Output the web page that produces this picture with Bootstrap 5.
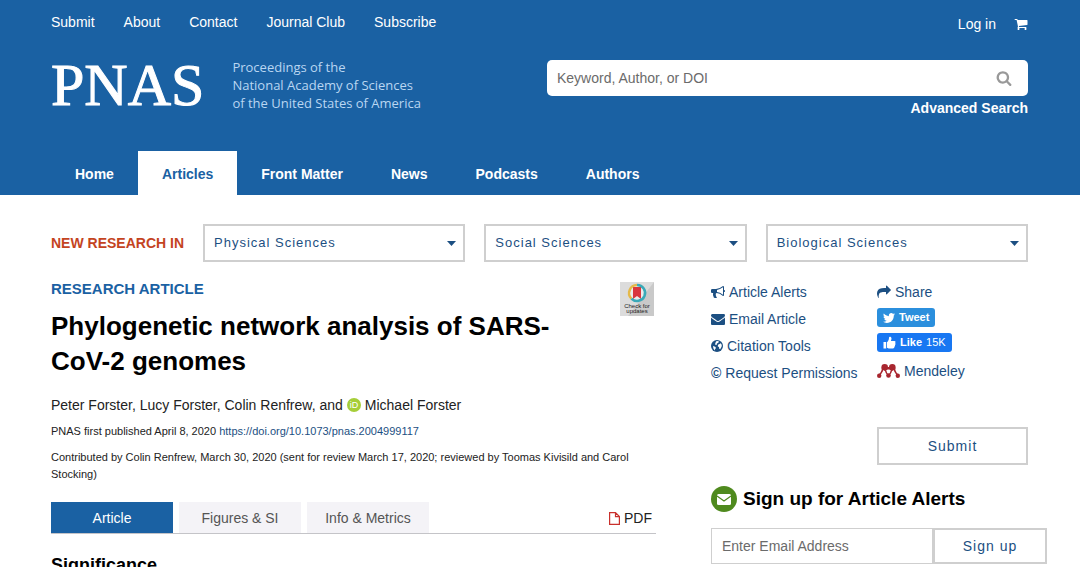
<!DOCTYPE html>
<html lang="en">
<head>
<meta charset="utf-8">
<meta name="viewport" content="width=device-width, initial-scale=1">
<title>Phylogenetic network analysis of SARS-CoV-2 genomes | PNAS</title>
<link href="https://cdn.jsdelivr.net/npm/bootstrap@5.3.0/dist/css/bootstrap.min.css" rel="stylesheet">
<style>
  :root { --pnas-blue: #1a61a3; --pnas-link: #1c4f82; --pnas-line: #cfcfcf; }
  body { font-family: "Liberation Sans", Arial, sans-serif; font-size: 14px; line-height: 20px; color: #333; background: #fff; }
  a { text-decoration: none; color: var(--pnas-link); }
  svg { display: block; flex: none; }
  .glyph { fill: currentColor; }
  .wrap { padding: 0 52px 0 51px; }
  .site-header { background: var(--pnas-blue); }
  .site-header a { color: #fff; }
  .top-links { gap: 29px; padding-top: 12px; }
  .account { gap: 18px; padding-top: 14px; }
  .brand-row { padding-top: 24px; height: 117px; }
  .logo { font-family: "Liberation Serif", serif; font-size: 60px; line-height: 54px; -webkit-text-stroke: 1px #fff; }
  .tagline { font-family: "Open Sans", sans-serif; font-size: 13px; line-height: 18px; color: #b9d6f2; margin-left: 28px; }
  .search-area { width: 481px; }
  .search-box { height: 36px; background: #fff; border-radius: 5px; margin-top: 2px; margin-bottom: 2px; }
  .search-box input { font-size: 14px; padding: 0 10px; border: 0; background: none; color: #555; }
  .search-box button { color: #999; padding: 0 15px; }
  input::placeholder { color: #6b6b6b !important; opacity: 1; }
  .main-nav .nav-link { font-weight: bold; padding: 13px 24px 11px; line-height: 20px; border-radius: 0; color: #fff; }
  .main-nav .nav-link.active { background: #fff; color: var(--pnas-blue); }
  .research-bar { gap: 19px; padding-top: 29px; }
  .research-bar h2 { font-size: 14px; font-weight: bold; line-height: 20px; color: #c4441f; white-space: nowrap; }
  .research-bar .form-select { flex: 1 1 0; height: 38px; border: 2px solid var(--pnas-line); border-radius: 0; color: var(--pnas-link); font-size: 13px; letter-spacing: 1px; padding: 0 24px 0 9px;
    background-image: url("data:image/svg+xml,%3Csvg xmlns='http://www.w3.org/2000/svg' viewBox='0 0 9 5'%3E%3Cpath fill='%231c4f82' d='M0 0h9L4.5 5z'/%3E%3C/svg%3E"); background-size: 9px 5px; background-position: right 7px center; }
  .page-grid { display: grid; grid-template-columns: minmax(0, 605fr) minmax(0, 317fr); column-gap: 55px; padding-top: 17px; }
  .kicker { font-size: 15px; font-weight: bold; line-height: 20px; color: var(--pnas-blue); }
  h1 { font-size: 26px; font-weight: bold; line-height: 35px; color: #000; margin: 10px 0 16px; }
  .badge-updates { margin: 3px 2px 0 0; }
  .authors { gap: 4px; color: #222; }
  .fine { font-size: 11px; line-height: 17px; margin-top: 8px; color: #222; }
  .fine + .fine { margin-top: 9px; }
  .article-tabs { gap: 6px; margin-top: 19px; border-bottom: 1px solid #c4c4c8; }
  .article-tabs .nav-link { width: 122px; height: 31px; padding: 6px 0; line-height: 20px; text-align: center; background: #f4f3f7; color: #555; border-radius: 0; }
  .article-tabs .nav-link.active { background: var(--pnas-blue); color: #fff; }
  .pdf-link { gap: 4px; color: #222; padding: 6px 4px 5px 0; }
  .section-title { font-size: 18px; font-weight: bold; line-height: 26px; color: #000; margin: 18px 0 0; }
  .tools { display: grid; grid-template-columns: 166px 1fr; padding-top: 3px; }
  .tool-list { gap: 7px; }
  .tool-list a { display: flex; align-items: center; gap: 4px; white-space: nowrap; }
  .share-btn { height: 19px; border: 0; border-radius: 3px; color: #fff; font-size: 11px; line-height: 19px; font-weight: bold; padding: 0 6px; gap: 4px; }
  .tweet { background: #2b8fdd; margin: -1px 0; }
  .like { background: #1877f2; margin-bottom: 2px; }
  .like span { font-weight: normal; }
  .btn-outline { border: 2px solid var(--pnas-line); border-radius: 0; background: #fff; color: var(--pnas-link); font-size: 14px; letter-spacing: 1px; padding: 0; }
  .submit-btn { height: 38px; margin-top: 46px; }
  .signup-title { gap: 6px; margin: 21px 0 16px; }
  .signup-title h2 { font-size: 19px; line-height: 26px; font-weight: bold; color: #000; margin: 0; }
  .signup { height: 36px; }
  .signup input { flex: none; width: 222px; border: 1px solid var(--pnas-line); border-radius: 0; font-size: 14px; padding: 0 10px; }
  .signup button { flex: none; width: 114px; }
</style>
</head>
<body>
<header class="site-header">
  <div class="wrap">
    <div class="d-flex justify-content-between">
      <nav class="top-links d-flex" aria-label="Site">
        <a href="#">Submit</a><a href="#">About</a><a href="#">Contact</a><a href="#">Journal Club</a><a href="#">Subscribe</a>
      </nav>
      <div class="account d-flex align-items-center">
        <a href="#">Log in</a>
        <a href="#" aria-label="Cart"><svg class="glyph" width="14" height="14" viewBox="0 0 1792 1792"><path d="M704 1536q0 52-38 90t-90 38-90-38-38-90 38-90 90-90 90 38 38 90zm896 0q0 52-38 90t-90 38-90-38-38-90 38-90 90-90 90 38 38 90zm128-1088v512q0 24-16.500 42.500t-40.500 21.500l-1044 122q13 60 13 70 0 16-24 64h920q26 0 45 19t19 45-19 45-45 19h-1024q-26 0-45-19t-19-45q0-11 8-31.500t16-36 21.500-40 15.500-29.500l-177-823h-204q-26 0-45-19t-19-45 19-45 45-19h256q16 0 28.500 6.500t19.500 15.500 13 24.500 8 26 5.500 29.500 4.500 26h1201q26 0 45 19t19 45z"/></svg></a>
      </div>
    </div>
    <div class="brand-row d-flex justify-content-between align-items-start">
      <a href="#" class="d-flex align-items-center"><span class="logo">PNAS</span><span class="tagline">Proceedings of the<br>National Academy of Sciences<br>of the United States of America</span></a>
      <form class="search-area">
        <div class="search-box d-flex">
          <input type="text" class="form-control" placeholder="Keyword, Author, or DOI" aria-label="Search">
          <button type="button" class="btn" aria-label="Submit search"><svg class="glyph" width="16" height="16" viewBox="0 0 1792 1792"><path d="M1216 832q0-185-131.500-316.500t-316.500-131.500-316.500 131.500-131.500 316.500 131.500 316.500 316.500 131.500 316.500-131.500 131.500-316.500zm512 832q0 52-38 90t-90 38q-54 0-90-38l-343-342q-179 124-399 124-143 0-273.500-55.500t-225-150-150-225-55.500-273.500 55.500-273.500 150-225 225-150 273.500-55.500 273.500 55.500 225 150 150 225 55.500 273.500q0 220-124 399l343 343q37 37 37 90z"/></svg></button>
        </div>
        <div class="text-end"><a href="#" class="fw-bold">Advanced Search</a></div>
      </form>
    </div>
    <nav class="main-nav nav" aria-label="Main">
      <a class="nav-link" href="#">Home</a><a class="nav-link active" href="#">Articles</a><a class="nav-link" href="#">Front Matter</a><a class="nav-link" href="#">News</a><a class="nav-link" href="#">Podcasts</a><a class="nav-link" href="#">Authors</a>
    </nav>
  </div>
</header>

<main class="wrap">
  <div class="research-bar d-flex align-items-center">
    <h2 class="m-0">NEW RESEARCH IN</h2>
    <select class="form-select" aria-label="Physical Sciences"><option>Physical Sciences</option></select>
    <select class="form-select" aria-label="Social Sciences"><option>Social Sciences</option></select>
    <select class="form-select" aria-label="Biological Sciences"><option>Biological Sciences</option></select>
  </div>

  <div class="page-grid">
    <article>
      <div class="d-flex justify-content-between align-items-start">
        <div>
          <div class="kicker">RESEARCH ARTICLE</div>
          <h1>Phylogenetic network analysis of SARS-<br>CoV-2 genomes</h1>
        </div>
        <a href="#" class="badge-updates" aria-label="Check for updates">
          <svg width="34" height="34" viewBox="0 0 34 34">
            <rect width="34" height="34" fill="#dcdcdc"/><path d="M34 0v34H8z" fill="#c9c9c9"/>
            <circle cx="17" cy="11" r="8" fill="#ececec"/>
            <path d="M13 5h8v12l-4-3-4 3z" fill="#d9363e"/>
            <path d="M17 3a8 8 0 0 0-5.600 13.600" fill="none" stroke="#e5b94a" stroke-width="2.500"/>
            <path d="M11.400 16.600A8 8 0 1 0 17 3" fill="none" stroke="#3aa9b8" stroke-width="2.500"/>
            <text x="17" y="26" text-anchor="middle" font-size="6" fill="#222">Check for</text>
            <text x="17" y="31" text-anchor="middle" font-size="6" fill="#222">updates</text>
          </svg>
        </a>
      </div>
      <div class="authors d-flex align-items-center">
        <span>Peter Forster, Lucy Forster, Colin Renfrew, and</span>
        <svg width="14" height="14" viewBox="0 0 14 14"><circle cx="7" cy="7" r="7" fill="#a6ce39"/><text x="7" y="10" text-anchor="middle" font-size="9" fill="#fff">iD</text></svg>
        <span>Michael Forster</span>
      </div>
      <p class="fine mb-0">PNAS first published April 8, 2020 <a href="#">https://doi.org/10.1073/pnas.2004999117</a></p>
      <p class="fine mb-0">Contributed by Colin Renfrew, March 30, 2020 (sent for review March 17, 2020; reviewed by Toomas Kivisild and Carol<br>Stocking)</p>
      <div class="article-tabs nav">
        <a class="nav-link active" href="#">Article</a>
        <a class="nav-link" href="#">Figures &amp; SI</a>
        <a class="nav-link" href="#">Info &amp; Metrics</a>
        <a class="pdf-link d-flex align-items-center ms-auto" href="#"><svg width="11" height="13" viewBox="0 0 11 13"><path d="M.6.6h5.900l3.900 4v7.800H.6zM6.500.6v4h3.900" fill="none" stroke="#c9302c" stroke-width="1.200"/></svg>PDF</a>
      </div>
      <h2 class="section-title">Significance</h2>
    </article>

    <aside>
      <div class="tools">
        <div class="tool-list d-flex flex-column">
          <a href="#"><svg class="glyph" width="14" height="14" viewBox="0 0 1792 1792"><path d="M1664 640q53 0 90.500 37.500t37.500 90.500-37.500 90.500-90.500 37.500v384q0 52-38 90t-90 38q-417-347-812-380-58 19-91 66t-31 100.500 40 92.500q-20 33-23 65.500t6 58 33.500 55 48 50 61.500 50.500q-29 58-111.500 83t-168.500 11.500-132-55.500q-7-23-29.500-87.500t-32-94.500-23-89-15-101 3.500-98.500 22-110.500h-122q-66 0-113-47t-47-113v-192q0-66 47-113t113-47h480q435 0 896-384 52 0 90 38t38 90v384zm-128 604v-954q-394 302-768 343v270q377 42 768 341z"/></svg>Article Alerts</a>
          <a href="#"><svg class="glyph" width="14" height="14" viewBox="0 0 1792 1792"><path d="M1792 710v794q0 66-47 113t-113 47h-1472q-66 0-113-47t-47-113v-794q44 49 101 87 362 246 497 345 57 42 92.500 65.500t94.500 48 110 24.500h2q51 0 110-24.500t94.500-48 92.500-65.500q170-123 498-345 57-39 100-87zm0-294q0 79-49 151t-122 123q-376 261-468 325-10 7-42.500 31t-54 38.500-52 32.500-57.500 27-50 9h-2q-23 0-50-9t-57.500-27-52-32.500-54-38.500-42.500-31q-91-64-262-182.500t-205-142.500q-62-42-117-115.500t-55-136.500q0-78 41.500-130t118.500-52h1472q65 0 112.500 47t47.500 113z"/></svg>Email Article</a>
          <a href="#"><svg class="glyph" width="12" height="12" viewBox="0 0 12 12"><circle cx="6" cy="6" r="6"/><path d="M5.200 1.200L7 1l1 .8-1 1.200-1.200.6.200 1-1.200.4-.7-.8.300-1.200zM8.500 4l1.300-.8 1 1.800-.2 1.800-1.400 2.400-1-.4-.2-1.800-1.200-.6.200-1.600zM2 6l2.200.8.8 1.200-1 1.200-.2 1.300L2.400 8.600z" fill="#fff"/></svg>Citation Tools</a>
          <a href="#"><b class="fw-bold">©</b>Request Permissions</a>
        </div>
        <div>
          <div class="tool-list d-flex flex-column align-items-start">
            <a href="#"><svg class="glyph" width="14" height="14" viewBox="0 0 1792 1792"><path d="M1792 640q0 26-19 45l-512 512q-19 19-45 19t-45-19-19-45v-256h-224q-98 0-175.500 6t-154 21.500-133 42.500-105.500 69.500-80 101-48.500 138.500-17.500 181q0 55 5 123 0 6 2.500 23.500t2.500 26.500q0 15-8.500 25t-23.500 10q-16 0-28-17-7-9-13-22t-13.500-30-10.500-24q-127-285-127-451 0-199 53-333 162-403 875-403h224v-256q0-26 19-45t45-19 45 19l512 512q19 19 19 45z"/></svg>Share</a>
            <button type="button" class="share-btn tweet d-flex align-items-center"><svg class="glyph" width="12" height="12" viewBox="0 0 24 24"><path d="M23.954 4.569c-.885.389-1.830.654-2.825.775 1.014-.611 1.794-1.574 2.163-2.723-.951.555-2.005.959-3.127 1.184-.896-.959-2.173-1.559-3.591-1.559-2.717 0-4.920 2.203-4.920 4.917 0 .390.045.765.127 1.124C7.691 8.094 4.066 6.130 1.640 3.161c-.427.722-.666 1.561-.666 2.475 0 1.710.870 3.213 2.188 4.096-.807-.026-1.566-.248-2.228-.616v.061c0 2.385 1.693 4.374 3.946 4.827-.413.111-.849.171-1.296.171-.314 0-.615-.030-.916-.086.631 1.953 2.445 3.377 4.604 3.417-1.680 1.319-3.809 2.105-6.102 2.105-.390 0-.779-.023-1.170-.067 2.189 1.394 4.768 2.209 7.557 2.209 9.054 0 13.999-7.496 13.999-13.986 0-.209 0-.420-.015-.630.961-.689 1.800-1.560 2.460-2.548z"/></svg>Tweet</button>
            <button type="button" class="share-btn like d-flex align-items-center"><svg class="glyph" width="13" height="13" viewBox="0 0 13 13"><path d="M.5 6h2.700v6.500H.500zM4 6.200C5.500 5 6 3.600 6 1.600 6 .2 8.500.3 8.500 2.600c0 1-.3 1.700-.6 2.400h3.500c1.300 0 1.500 1.300.7 1.900.7.600.5 1.700-.2 2 .4.700.1 1.500-.5 1.700.2 1-.4 1.900-1.500 1.900H6.500c-1.200 0-1.600-.6-2.500-.8z"/></svg>Like <span>15K</span></button>
            <a href="#"><svg width="23" height="14" viewBox="0 0 23 14" fill="#a8262f"><circle cx="2.200" cy="11.700" r="2.200"/><circle cx="11.500" cy="11.500" r="2.300"/><circle cx="20.800" cy="11.700" r="2.200"/><circle cx="7.700" cy="3.300" r="3.300"/><circle cx="15.300" cy="3.300" r="3.300"/><path d="M8 3h7l1 4-2.500-1.500h-4L7 7z"/><path d="M5.500 4c.5 4-1 4-3 7M17.500 4c-.5 4 1 4 3 7M8 4c1 4 .5 5 3 7M15 4c-1 4-.5 5-3 7" fill="none" stroke="#a8262f" stroke-width="1.500"/></svg>Mendeley</a>
          </div>
          <button type="button" class="btn btn-outline submit-btn w-100">Submit</button>
        </div>
      </div>
      <div class="signup-title d-flex align-items-center">
        <svg width="26" height="26" viewBox="0 0 26 26"><circle cx="13" cy="13" r="13" fill="#4f8a1e"/><rect x="6" y="8" width="14" height="11" rx="1.500" fill="#fff"/><path d="M6 10l7 5 7-5" fill="none" stroke="#4f8a1e" stroke-width="1.200"/></svg>
        <h2>Sign up for Article Alerts</h2>
      </div>
      <form class="signup d-flex">
        <input type="email" class="form-control" placeholder="Enter Email Address" aria-label="Email address">
        <button type="button" class="btn btn-outline">Sign up</button>
      </form>
    </aside>
  </div>
</main>
<script src="https://cdn.jsdelivr.net/npm/bootstrap@5.3.0/dist/js/bootstrap.bundle.min.js"></script>
</body>
</html>
